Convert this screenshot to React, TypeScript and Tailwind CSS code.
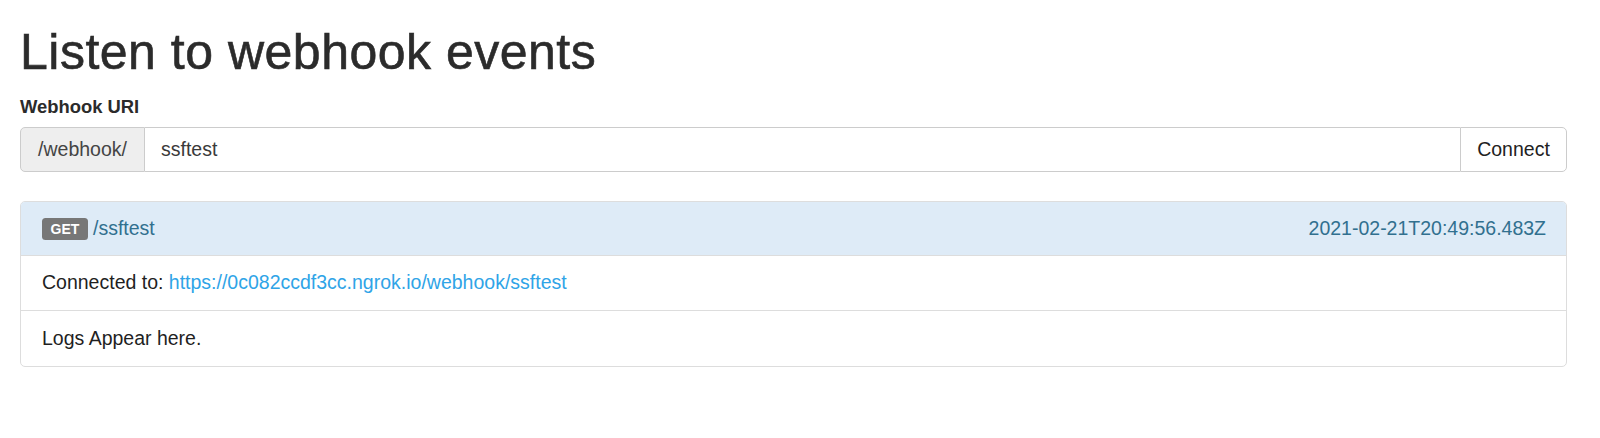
import React from 'react';

const font = { fontFamily: '"Liberation Sans", Arial, sans-serif' };

const WebhookListener = () => {
  return (
    <div className="min-h-screen w-full bg-white text-[#1f1f1f]" style={font}>
      <div className="ml-[20px] w-[1547px] pt-[25px]">
        <h1 className="text-[50px] leading-[55px] font-normal tracking-[0.5px] text-[#2b2b2b] [-webkit-text-stroke:0.6px_#2b2b2b]">
          Listen to webhook events
        </h1>

        <label className="mt-[14px] block text-[18.4px] font-bold leading-[26px] text-[#2b2b2b]">
          Webhook URI
        </label>

        {/* URI input group */}
        <div className="mt-[7px] flex h-[45px] text-[19.5px]">
          <span className="flex w-[125px] items-center justify-center rounded-l-[5px] border border-[#ccc] bg-[#eee] text-[#444]">
            /webhook/
          </span>
          <input
            className="h-full flex-1 border-y border-[#ccc] bg-white px-[16px] text-[#3a3a3a] outline-none"
            defaultValue="ssftest"
          />
          <button className="w-[107px] rounded-r-[5px] border border-[#ccc] bg-white text-[#222]">
            Connect
          </button>
        </div>

        {/* Event panel */}
        <div className="mt-[29px] overflow-hidden rounded-[5px] border border-[#ddd] text-[19.5px]">
          <div className="flex h-[54px] items-center justify-between border-b border-[#ddd] bg-[#deebf7] pl-[21px] pr-[20px] text-[#31708f]">
            <div className="flex items-center gap-[5px]">
              <span className="flex h-[22px] w-[46px] items-center justify-center rounded-[3.5px] bg-[#777] text-[14px] font-bold leading-none text-white">
                GET
              </span>
              <span>/ssftest</span>
            </div>
            <span>2021-02-21T20:49:56.483Z</span>
          </div>
          <div className="flex h-[55px] items-center border-b border-[#ddd] px-[21px]">
            <span>
              Connected to:{' '}
              <a href="#" className="text-[#2fa4e7]">
                https://0c082ccdf3cc.ngrok.io/webhook/ssftest
              </a>
            </span>
          </div>
          <div className="flex h-[55px] items-center px-[21px]">Logs Appear here.</div>
        </div>
      </div>
    </div>
  );
};

export default function App() {
  return <WebhookListener />;
}
